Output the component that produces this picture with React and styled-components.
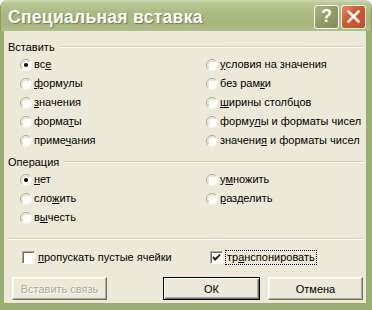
import React from 'react'
import styled, { createGlobalStyle } from 'styled-components'

const GlobalStyle = createGlobalStyle`
  html, body {
    margin: 0;
    padding: 0;
    background: #ffffff;
  }
  * {
    box-sizing: border-box;
  }
`

function Radio({ checked }) {
    return (
        <svg width="12" height="12" viewBox="0 0 12 12">
            <circle cx="6" cy="6" r="5.5" fill="#ffffff" />
            <path d="M2.1 9.9 A5.5 5.5 0 0 1 9.9 2.1" fill="none" stroke="#aca899" strokeWidth="1" />
            <path d="M2.9 9.1 A4.4 4.4 0 0 1 9.1 2.9" fill="none" stroke="#d6d3c6" strokeWidth="1" />
            <path d="M9.9 2.1 A5.5 5.5 0 0 1 2.1 9.9" fill="none" stroke="#f4f3ee" strokeWidth="1" />
            {checked && <circle cx="6" cy="6" r="2" fill="#000000" />}
        </svg>
    )
}

function Check({ checked }) {
    return (
        <CheckBox>
            {checked && (
                <svg width="11" height="11" viewBox="0 0 11 11">
                    <path d="M2 5 L4.2 7.5 L9 2.6" fill="none" stroke="#21211a" strokeWidth="2" />
                </svg>
            )}
        </CheckBox>
    )
}

// label with access key underlined at index u
function Label({ text, u }) {
    if (u === undefined) return <span>{text}</span>
    return (
        <span>
            {text.slice(0, u)}
            <u>{text[u]}</u>
            {text.slice(u + 1)}
        </span>
    )
}

const pasteLeft = [
    { text: 'все', u: 2, checked: true },
    { text: 'формулы', u: 0 },
    { text: 'значения', u: 0 },
    { text: 'форматы', u: 5 },
    { text: 'примечания', u: 5 },
]

const pasteRight = [
    { text: 'условия на значения', u: 0 },
    { text: 'без рамки', u: 7 },
    { text: 'ширины столбцов', u: 0 },
    { text: 'формулы и форматы чисел', u: 5 },
    { text: 'значения и форматы чисел', u: 7 },
]

const opLeft = [
    { text: 'нет', u: 0, checked: true },
    { text: 'сложить', u: 3 },
    { text: 'вычесть', u: 1 },
]

const opRight = [
    { text: 'умножить', u: 1 },
    { text: 'разделить', u: 0 },
]

function Options({ left, right }) {
    return (
        <OptionGrid>
            <Column>
                {left.map((o) => (
                    <OptionRow key={o.text}>
                        <Radio checked={o.checked} />
                        <Label text={o.text} u={o.u} />
                    </OptionRow>
                ))}
            </Column>
            <Column>
                {right.map((o) => (
                    <OptionRow key={o.text}>
                        <Radio checked={o.checked} />
                        <Label text={o.text} u={o.u} />
                    </OptionRow>
                ))}
            </Column>
        </OptionGrid>
    )
}

function App() {
    return (
        <>
            <GlobalStyle />
            <Window>
                <TitleBar>
                    <Title>Специальная вставка</Title>
                    <Caption>
                        <CaptionButton kind="help">?</CaptionButton>
                        <CaptionButton kind="close">
                            <svg width="15" height="15" viewBox="0 0 15 15">
                                <path d="M2.5 2.5 L12.5 12.5 M12.5 2.5 L2.5 12.5" stroke="#ffffff" strokeWidth="2.6" strokeLinecap="square" />
                            </svg>
                        </CaptionButton>
                    </Caption>
                </TitleBar>

                <Frame>
                    <GroupHeader>
                        <span>Вставить</span>
                        <Etched />
                    </GroupHeader>
                    <Options left={pasteLeft} right={pasteRight} />

                    <GroupHeader second>
                        <span>Операция</span>
                        <Etched />
                    </GroupHeader>
                    <Options left={opLeft} right={opRight} />

                    <Separator />

                    <CheckRow>
                        <CheckItem>
                            <Check />
                            <Label text="пропускать пустые ячейки" u={0} />
                        </CheckItem>
                        <CheckItem>
                            <Check checked />
                            <Focus>
                                <Label text="транспонировать" u={2} />
                            </Focus>
                        </CheckItem>
                    </CheckRow>

                    <ButtonRow>
                        <Button disabled>Вставить связь</Button>
                        <Spacer />
                        <Button primary>ОК</Button>
                        <Button>Отмена</Button>
                    </ButtonRow>
                </Frame>
            </Window>
        </>
    )
}

const Window = styled.div`
  width: 372px;
  height: 310px;
  display: flex;
  flex-direction: column;
  border-radius: 7px 7px 0 0;
  overflow: hidden;
  font-family: "Liberation Sans", Arial, sans-serif;
  font-size: 11px;
  line-height: 13px;
  color: #000000;
`

const TitleBar = styled.div`
  height: 31px;
  flex: none;
  display: flex;
  align-items: center;
  padding: 0 5px 0 7px;
  background: linear-gradient(to bottom, #cdd9b2 0%, #b7c794 12%, #a8ba80 45%, #a5b77d 75%, #aebf89 100%);
  border-left: 1px solid #8a9d61;
  border-right: 1px solid #8a9d61;
`

const Title = styled.div`
  flex: 1;
  color: #ffffff;
  font-family: "Liberation Sans", Arial, sans-serif;
  font-weight: bold;
  font-size: 17.5px;
  line-height: 20px;
  letter-spacing: 0.3px;
  text-shadow: 1px 1px 1px #6e7c4f;
  padding-top: 2px;
`

const Caption = styled.div`
  display: flex;
  gap: 2px;
  padding-top: 2px;
`

const CaptionButton = styled.div`
  width: 25px;
  height: 24px;
  border: 1px solid #ffffff;
  border-radius: 3px;
  display: flex;
  align-items: center;
  justify-content: center;
  color: #ffffff;
  font-family: "Liberation Sans", Arial, sans-serif;
  font-weight: bold;
  font-size: 18px;
  background: ${(p) =>
    p.kind === 'close'
      ? 'linear-gradient(135deg, #e58a67 0%, #d4592f 40%, #c94a22 100%)'
      : 'linear-gradient(135deg, #aab884 0%, #8f9f66 45%, #7f8f58 100%)'};
`

const Frame = styled.div`
  flex: 1;
  min-height: 0;
  display: flex;
  flex-direction: column;
  background: #ece9d8;
  border-left: 4px solid #9aad70;
  border-right: 6px solid #9aad70;
  border-bottom: 7px solid #9aad70;
  padding: 9px 3px 0 4px;
  overflow: hidden;
`

const GroupHeader = styled.div`
  display: flex;
  align-items: center;
  gap: 5px;
  height: 14px;
  flex: none;
  margin-top: ${(p) => (p.second ? '5px' : '0')};
`

const Etched = styled.div`
  flex: 1;
  height: 2px;
  border-top: 1px solid #d0d0bf;
  border-bottom: 1px solid #ffffff;
`

const OptionGrid = styled.div`
  display: grid;
  grid-template-columns: 186px 1fr;
  padding-left: 12px;
  margin-top: 1px;
  flex: none;
`

const Column = styled.div`
  display: flex;
  flex-direction: column;
`

const OptionRow = styled.div`
  height: 19px;
  display: flex;
  align-items: center;
  gap: 2px;
  white-space: nowrap;
`

const Separator = styled.div`
  height: 2px;
  flex: none;
  margin: 11px 0 0 1px;
  border-top: 1px solid #d0d0bf;
  border-bottom: 1px solid #ffffff;
`

const CheckRow = styled.div`
  display: grid;
  grid-template-columns: 188px 1fr;
  padding-left: 14px;
  margin-top: 10px;
  height: 15px;
  flex: none;
`

const CheckItem = styled.div`
  display: flex;
  align-items: center;
  gap: 3px;
  white-space: nowrap;
`

const CheckBox = styled.div`
  width: 13px;
  height: 13px;
  flex: none;
  background: #ffffff;
  border: 1px solid;
  border-color: #aca899 #ffffff #ffffff #aca899;
  box-shadow: inset 1px 1px 0 #716f64;
  display: flex;
  align-items: center;
  justify-content: center;
`

const Focus = styled.span`
  outline: 1px dotted #000000;
  outline-offset: 0;
  padding: 0 1px;
`

const ButtonRow = styled.div`
  display: flex;
  gap: 8px;
  margin-top: 12px;
  padding: 0 0 0 4px;
  flex: none;
`

const Spacer = styled.div`
  flex: 1;
`

const Button = styled.button`
  width: ${(p) => (p.primary ? '97px' : '95px')};
  height: 23px;
  padding: 0;
  font-family: "Liberation Sans", Arial, sans-serif;
  font-size: 11px;
  font-weight: normal;
  color: ${(p) => (p.disabled ? '#aca899' : '#000000')};
  background: #ece9d8;
  border: 1px solid;
  border-color: ${(p) => (p.primary ? '#000000' : '#ffffff #716f64 #716f64 #ffffff')};
  box-shadow: ${(p) =>
    p.primary
      ? 'inset 1px 1px 0 #ffffff, inset -1px -1px 0 #716f64, inset -2px -2px 0 #aca899'
      : 'inset -1px -1px 0 #aca899, inset 1px 1px 0 #f6f5ef'};
  text-shadow: ${(p) => (p.disabled ? '1px 1px 0 #ffffff' : 'none')};
`

export default App
